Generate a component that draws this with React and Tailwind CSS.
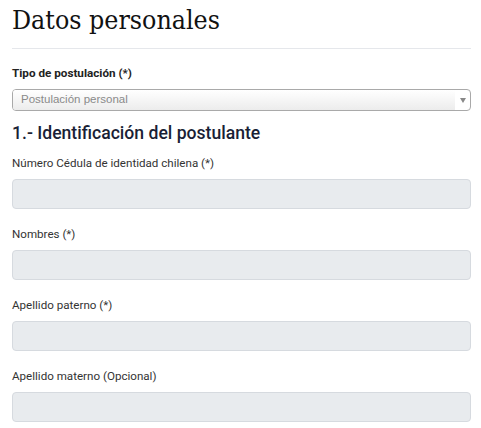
import React from "react";

const fields = [
  "Número Cédula de identidad chilena (*)",
  "Nombres (*)",
  "Apellido paterno (*)",
  "Apellido materno (Opcional)",
];

const Field = ({ label }) => (
  <div className="flex flex-col">
    <label className="text-[11.6px] leading-[14px] text-[#333]">{label}</label>
    <input
      type="text"
      className="mt-[9px] h-[30px] w-full rounded-[4px] border border-[#d6dadf] bg-[#e8ebee] px-2 outline-none"
    />
  </div>
);

export default function App() {
  return (
    <div className="min-h-screen bg-white pl-[12px] pr-[10px] font-['Roboto',sans-serif]">
      <h1 className="pt-[4px] font-['DejaVu_Serif_Condensed','DejaVu_Serif',serif] text-[26.5px] leading-[32px] text-[#111]">
        Datos personales
      </h1>
      <hr className="mt-[12px] border-t border-[#e5e7eb]" />

      <div className="mt-[17px] flex flex-col">
        <label className="text-[11.7px] font-bold leading-[14px] text-[#222]">
          Tipo de postulación (*)
        </label>
        <div className="mt-[9px] flex h-[22px] overflow-hidden rounded-[4px] border border-[#a9a9a9] bg-white">
          <div className="flex flex-1 items-center bg-[linear-gradient(#fff,#ececec)] pl-[8px] font-['Liberation_Sans',sans-serif] text-[11.5px] text-[#8a8a8a]">
            Postulación personal
          </div>
          <div className="flex w-[15px] items-center justify-center">
            <span className="h-0 w-0 border-x-[3px] border-t-[5px] border-x-transparent border-t-[#888]" />
          </div>
        </div>
      </div>

      <h2 className="mt-[11px] text-[17.6px] font-medium leading-[22px] text-[#1a1f36]">
        1.- Identificación del postulante
      </h2>

      <div className="mt-[12px] flex flex-col gap-[18px]">
        {fields.map((f) => (
          <Field key={f} label={f} />
        ))}
      </div>
    </div>
  );
}
